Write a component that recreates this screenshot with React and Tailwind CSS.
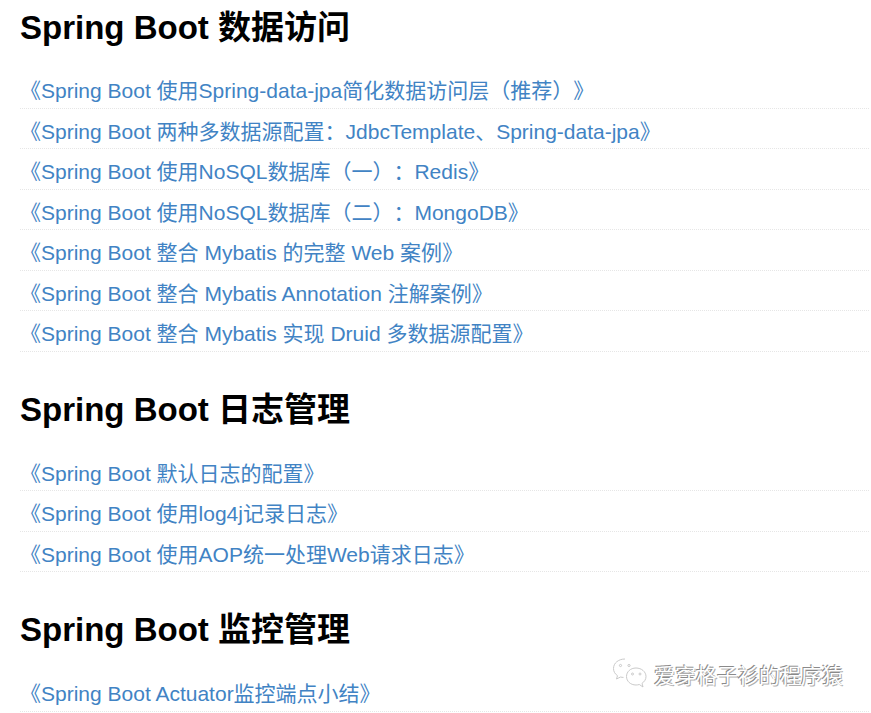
const sections = [
  {
    title: "Spring Boot 数据访问",
    listClass: "mt-[20px]",
    links: [
      "《Spring Boot 使用Spring-data-jpa简化数据访问层（推荐）》",
      "《Spring Boot 两种多数据源配置：JdbcTemplate、Spring-data-jpa》",
      "《Spring Boot 使用NoSQL数据库（一）：Redis》",
      "《Spring Boot 使用NoSQL数据库（二）：MongoDB》",
      "《Spring Boot 整合 Mybatis 的完整 Web 案例》",
      "《Spring Boot 整合 Mybatis Annotation 注解案例》",
      "《Spring Boot 整合 Mybatis 实现 Druid 多数据源配置》",
    ],
  },
  {
    title: "Spring Boot 日志管理",
    listClass: "mt-[21px]",
    links: [
      "《Spring Boot 默认日志的配置》",
      "《Spring Boot 使用log4j记录日志》",
      "《Spring Boot 使用AOP统一处理Web请求日志》",
    ],
  },
  {
    title: "Spring Boot 监控管理",
    listClass: "mt-[21px]",
    links: ["《Spring Boot Actuator监控端点小结》"],
  },
];

function Watermark() {
  return (
    <div className="absolute left-[612px] top-[658px] flex items-center gap-[6px]">
      <svg width="36" height="32" viewBox="0 0 36 32" fill="none" stroke="#c4c4c4" strokeWidth="0.9">
        <path d="M13 1C6.500 1 1.500 5 1.500 10.500c0 3 1.500 5.500 4 7.200L4.500 21l4-2c1 .3 2 .4 3 .4" />
        <path d="M24 10c-5.500 0-9.500 3.800-9.500 8.500S18.500 27 24 27c1.200 0 2.200-.2 3.300-.5l3.700 2.500-1-3.700c2.500-1.600 4-4 4-6.800C34 13.800 29.500 10 24 10z" />
        <circle cx="8.500" cy="7.500" r="1.100" />
        <circle cx="17" cy="7.500" r="1.100" />
        <circle cx="20.500" cy="16" r="1" />
        <circle cx="28" cy="16" r="1" />
      </svg>
      <span className="font-['Noto_Sans_CJK_SC',sans-serif] text-[21px] leading-none text-white [text-shadow:-1px_-1px_0_#8a8a8a,1px_1px_0_#b0b0b0]">
        爱穿格子衫的程序猿
      </span>
    </div>
  );
}

export default function App() {
  return (
    <div className="relative h-[713px] overflow-hidden bg-white pl-5 pr-[2px] font-['Liberation_Sans','Noto_Sans_CJK_SC',sans-serif] [text-spacing-trim:space-all]">
      {sections.map((section, i) => (
        <section key={section.title} className={i === 0 ? "pt-[7px]" : "pt-[37px]"}>
          <h2 className="h-[41px] text-[33px] font-bold leading-[41px] text-black">
            {section.title}
          </h2>
          <ul className={section.listClass}>
            {section.links.map((link) => (
              <li
                key={link}
                className="h-[40.5px] whitespace-nowrap border-b border-dotted border-[#e6e6e6] pt-[5px] text-[21px] leading-[36px] text-[#4183c4]"
              >
                {link}
              </li>
            ))}
          </ul>
        </section>
      ))}
      <Watermark />
    </div>
  );
}
